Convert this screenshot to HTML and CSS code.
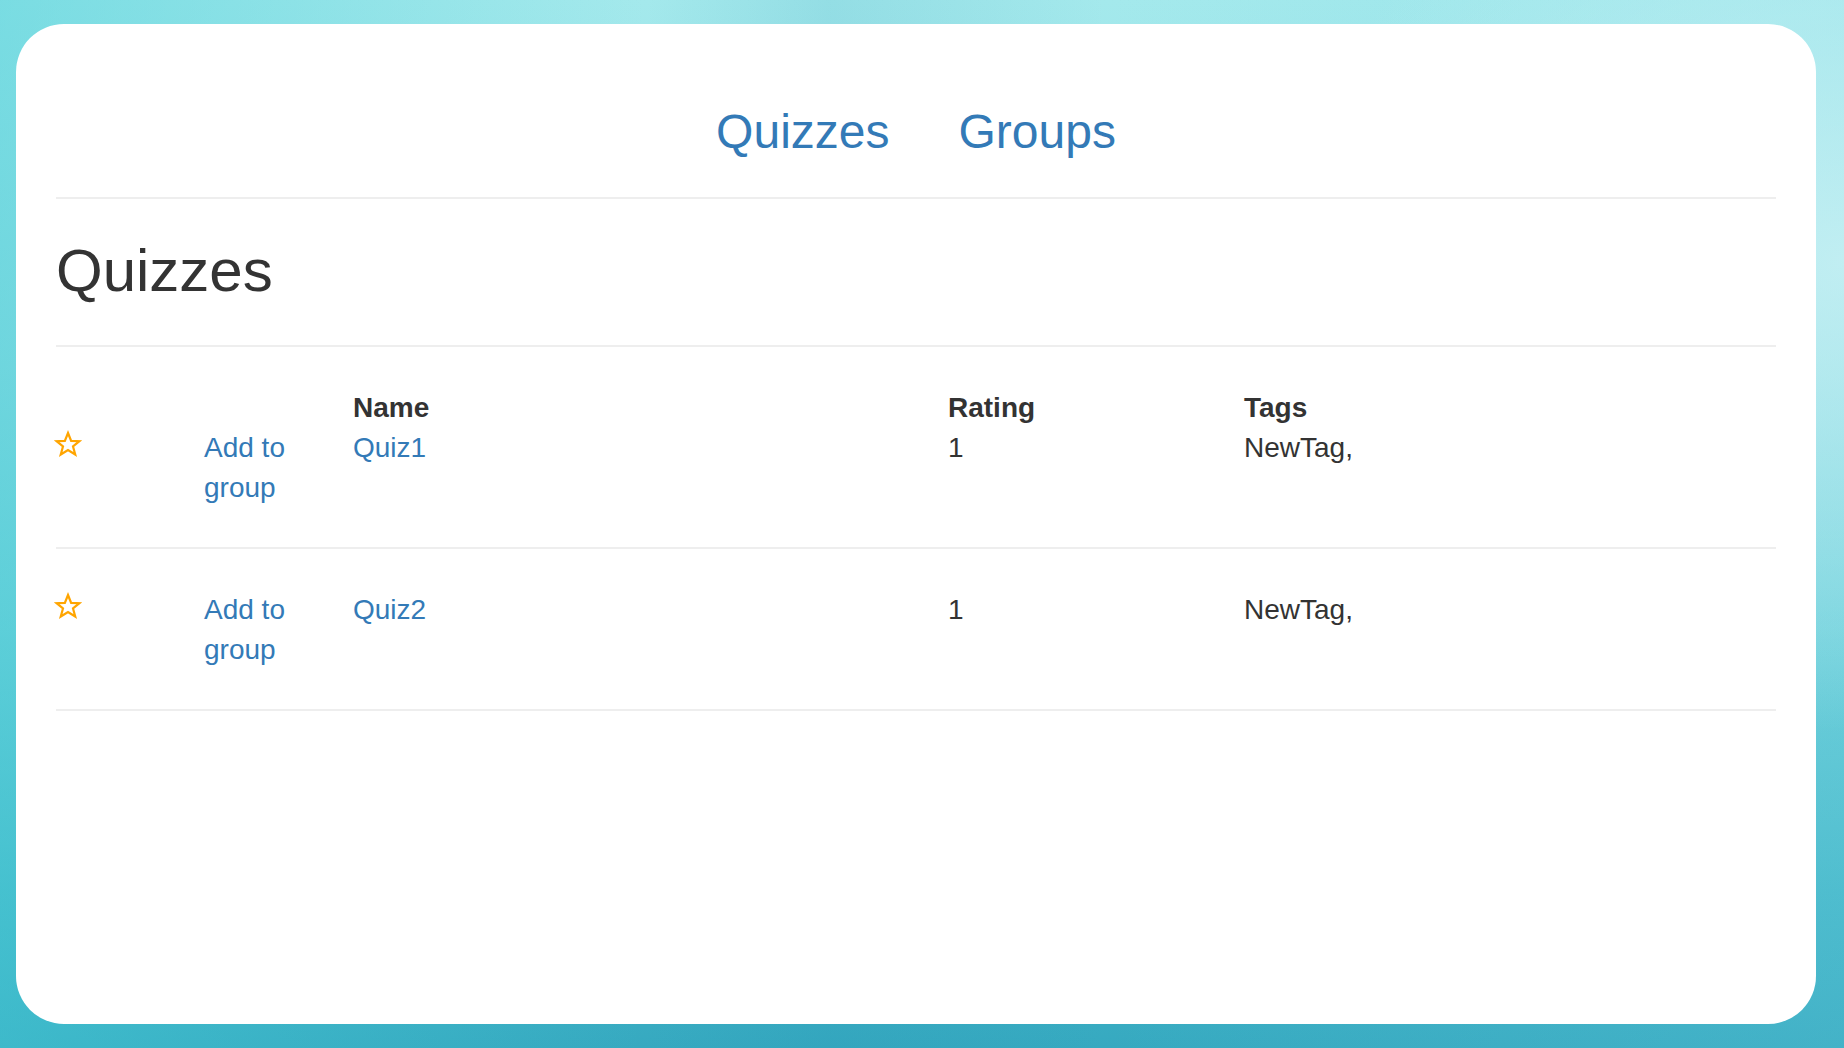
FILE: index.html
```html
<!DOCTYPE html>
<html lang="en">
<head>
<meta charset="utf-8">
<title>Quizzes</title>
<link rel="stylesheet" href="styles.css">
</head>
<body>
<div class="card">
  <nav class="nav">
    <a class="nav-link" href="#">Quizzes</a>
    <a class="nav-link" href="#">Groups</a>
  </nav>
  <hr class="rule rule-nav">
  <h2 class="title">Quizzes</h2>
  <hr class="rule rule-title">
  <div class="list">
    <div class="row first">
      <div class="cell"><span class="head">&nbsp;</span><span class="star"><svg viewBox="0 0 24 24" width="28" height="28"><path d="M12 2.6 14.7 9.3 21.8 9.6 16.3 14.1 18.2 21 12 17.1 5.8 21 7.7 14.1 2.2 9.6 9.3 9.3Z" fill="none" stroke="#ffa500" stroke-width="1.9" stroke-linejoin="miter"/></svg></span></div>
      <div class="cell"><span class="head">&nbsp;</span><a class="link narrow" href="#">Add to group</a></div>
      <div class="cell"><span class="head">Name</span><a class="link" href="#">Quiz1</a></div>
      <div class="cell"><span class="head">Rating</span><span>1</span></div>
      <div class="cell"><span class="head">Tags</span><span>NewTag,</span></div>
    </div>
    <div class="row">
      <div class="cell"><span class="star"><svg viewBox="0 0 24 24" width="28" height="28"><path d="M12 2.6 14.7 9.3 21.8 9.6 16.3 14.1 18.2 21 12 17.1 5.8 21 7.7 14.1 2.2 9.6 9.3 9.3Z" fill="none" stroke="#ffa500" stroke-width="1.9" stroke-linejoin="miter"/></svg></span></div>
      <div class="cell"><a class="link narrow" href="#">Add to group</a></div>
      <div class="cell"><a class="link" href="#">Quiz2</a></div>
      <div class="cell"><span>1</span></div>
      <div class="cell"><span>NewTag,</span></div>
    </div>
  </div>
</div>
</body>
</html>
```
FILE: styles.css
```css
* { box-sizing: border-box; }
html, body { margin: 0; height: 100%; }
body {
  padding: 24px 28px 24px 16px;
  font-family: "Liberation Sans", Arial, sans-serif;
  font-size: 28px;
  line-height: 40px;
  color: #333;
  background:
    radial-gradient(ellipse 30% 45% at 100% 25%, rgba(205,242,245,0.8), rgba(205,242,245,0)),
    linear-gradient(90deg, rgba(70,205,215,0.45) 0%, rgba(70,205,215,0) 35%, rgba(30,140,175,0.12) 45%, rgba(40,150,180,0) 60%, rgba(120,215,230,0.2) 100%),
    linear-gradient(180deg, #a4e9ec 0%, #8fdde4 35%, #6fd0da 60%, #45b7c9 85%, #36a9c0 100%);
  overflow: hidden;
}
.card {
  height: 1000px;
  background: #fff;
  border-radius: 48px;
  padding: 40px;
}
.nav {
  display: flex;
  justify-content: center;
  gap: 69px;
  margin-top: 41px;
  font-size: 48px;
  line-height: 53px;
}
.nav-link { color: #337ab7; text-decoration: none; }
.rule {
  border: 0;
  border-top: 2px solid #eee;
  margin: 0;
  height: 0;
}
.rule-nav { margin-top: 39px; }
.title {
  margin: 39px 0 0;
  font-size: 60px;
  line-height: 66px;
  font-weight: 400;
  color: #333;
}
.rule-title { margin-top: 41px; }
.row {
  display: grid;
  grid-template-columns: 148px 149px 595px 296px 1fr;
  padding: 41px 0 39px;
  border-bottom: 2px solid #eee;
}
.cell { display: flex; flex-direction: column; align-items: flex-start; }
.head { font-weight: 700; height: 40px; }
.link { color: #337ab7; text-decoration: none; }
.narrow { max-width: 120px; }
.star { height: 40px; display: flex; align-items: center; margin: -4px 0 0 -2px; }
.star svg { display: block; }
```
